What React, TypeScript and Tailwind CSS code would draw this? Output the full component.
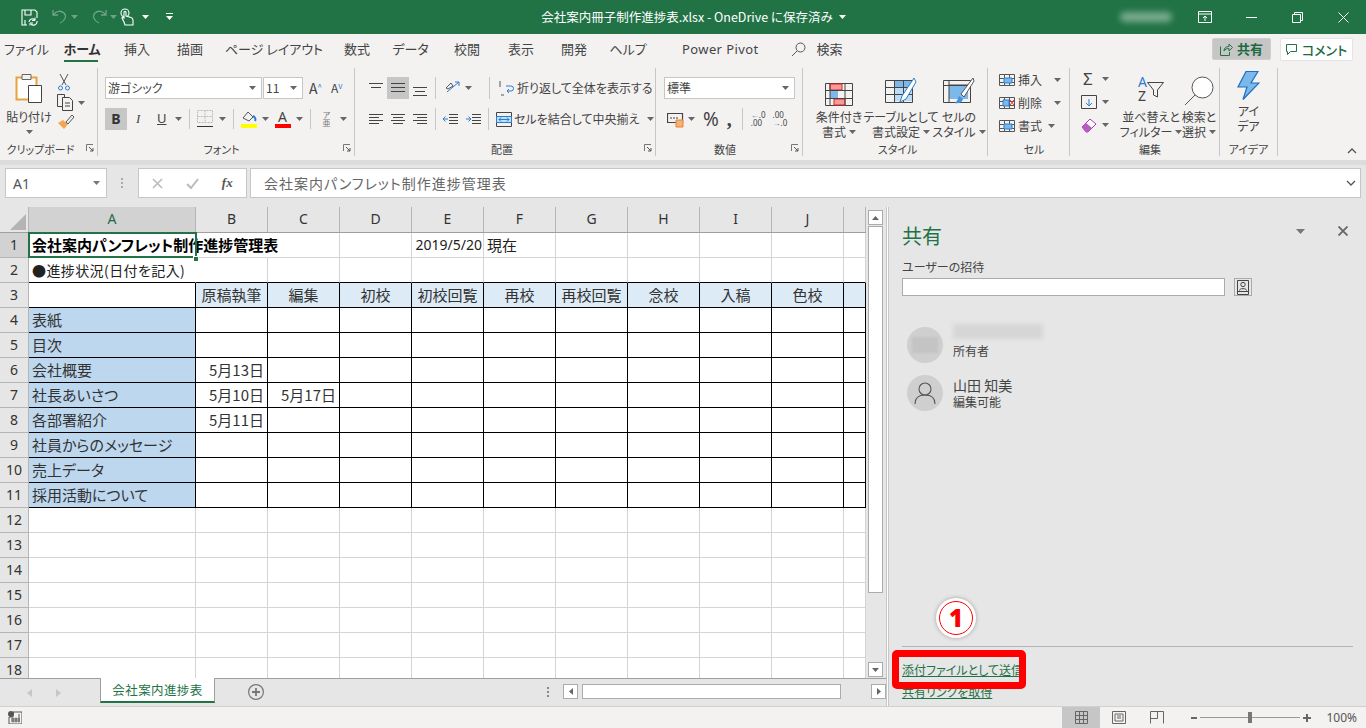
import React from "react";

const FONT = "[font-family:'Noto_Sans_CJK_JP','Noto_Sans',sans-serif]";

function Car({ c = "#666", className = "" }: { c?: string; className?: string }) {
  return (
    <svg width="7" height="4" viewBox="0 0 7 4" className={"shrink-0 " + className}>
      <path d="M0 0h7L3.5 4z" fill={c} />
    </svg>
  );
}
function Launcher() {
  return (
    <svg width="8" height="8" viewBox="0 0 8 8" className="absolute right-[3px] bottom-[4px]">
      <path d="M.5 7V.5H7" fill="none" stroke="#777" />
      <path d="M3 3l4 4M7 4v3H4" fill="none" stroke="#555" />
    </svg>
  );
}
function Sep({ h = 20, className = "" }: { h?: number; className?: string }) {
  return <div className={"w-px bg-[#c6c6c6] shrink-0 " + className} style={{ height: h }} />;
}
function Lines({ ws, gap = 5 }: { ws: [number, number][]; gap?: number }) {
  return (
    <svg width="16" height="16" viewBox="0 0 16 16">
      {ws.map(([x, w], i) => (
        <path key={i} d={`M${x} ${3.5 + i * gap}h${w}`} stroke="#444" />
      ))}
    </svg>
  );
}
function Group({ w, label, launcher, children, pad = 0 }: { w: number; label: string; launcher?: boolean; children: React.ReactNode; pad?: number }) {
  return (
    <div className="relative h-full flex flex-col shrink-0 border-r border-[#c6c6c6]" style={{ width: w, paddingLeft: pad }}>
      <div className="flex-1 min-h-0">{children}</div>
      <div className={"text-center text-[11px] leading-[14px] text-[#444] whitespace-nowrap " + (launcher ? "pr-4" : "")}>{label}</div>
      {launcher && <Launcher />}
    </div>
  );
}
function Combo({ w, text, cls = "" }: { w: number; text: string; cls?: string }) {
  return (
    <div className={"h-[22px] bg-white border border-[#c6c6c6] flex items-center justify-between pl-[2px] pr-[5px] text-[12px] text-[#444] " + cls} style={{ width: w }}>
      <span>{text}</span>
      <Car />
    </div>
  );
}
function Big({ w, icon, l1, l2, caret1 }: { w: number; icon: React.ReactNode; l1: string; l2: string; caret1?: boolean }) {
  return (
    <div className="flex flex-col items-center shrink-0" style={{ width: w }}>
      <div className="h-[38px] flex items-end">{icon}</div>
      <div className="mt-[3px] text-[12px] leading-[15px] text-[#444] whitespace-nowrap text-center">{l1}</div>
      <div className="text-[12px] leading-[15px] text-[#444] whitespace-nowrap flex items-center gap-[3px]">
        {l2}
        {caret1 !== false && <Car />}
      </div>
    </div>
  );
}

const cols = ["A", "B", "C", "D", "E", "F", "G", "H", "I", "J", ""];
const widths = [167, 72, 72, 72, 72, 72, 72, 72, 72, 72, 22];
const heads = ["", "原稿執筆", "編集", "初校", "初校回覧", "再校", "再校回覧", "念校", "入稿", "色校", ""];
const rowA = ["表紙", "目次", "会社概要", "社長あいさつ", "各部署紹介", "社員からのメッセージ", "売上データ", "採用活動について"];
const dates: Record<string, string> = { "6-1": "5月13日", "7-1": "5月10日", "7-2": "5月17日", "8-1": "5月11日" };

function Grid() {
  const rows = Array.from({ length: 18 }, (_, i) => i + 1);
  return (
    <div className={"relative w-[866px] flex-1 min-h-0 overflow-hidden bg-white pt-0 text-[15px] text-[#222] " + FONT}>
      <div className="flex h-[26px] bg-[#e6e6e6] border-b border-[#9f9f9f]">
        <div className="w-[29px] border-r border-[#b5b5b5] flex items-end justify-end p-[2px] shrink-0">
          <svg width="16" height="16" viewBox="0 0 16 16"><path d="M16 0v16H0z" fill="#b4b4b4" /></svg>
        </div>
        {cols.map((c, i) => (
          <div key={i} className={"shrink-0 text-center text-[14px] leading-[24px] border-r border-[#b5b5b5] [font-family:'Noto_Sans',sans-serif] " + (i === 0 ? "bg-[#d2d2d2] text-[#1f6b45]" : "text-[#333]")} style={{ width: widths[i] }}>
            {c}
          </div>
        ))}
      </div>
      {rows.map((r) => (
        <div key={r} className="flex h-[25px]">
          <div className={"w-[29px] shrink-0 border-r border-b border-[#b5b5b5] text-center text-[14px] leading-[24px] text-[#333] [font-family:'Noto_Sans',sans-serif] " + (r === 1 ? "bg-[#d2d2d2] text-[#1f6b45]" : "bg-[#e6e6e6]")}>{r}</div>
          {widths.map((w, i) => {
            const black = r >= 2 && r <= 11;
            const vblack = r >= 3 && r <= 11;
            let cls = "shrink-0 leading-[24px] whitespace-nowrap border-r border-b ";
            cls += black ? "border-b-black " : "border-b-[#d4d4d4] ";
            cls += vblack ? "border-r-black " : "border-r-[#d4d4d4] ";
            if (r === 1 && i < 2) cls += "border-r-transparent ";
            if (r === 2 && i === 0) cls += "border-r-transparent ";
            if (r === 3 && i > 0) cls += "bg-[#ddebf7] text-center text-[#333] ";
            if (r >= 4 && r <= 11 && i === 0) cls += "bg-[#bdd7ee] pl-[3px] text-[#333] ";
            let content = "";
            if (r === 1 && i === 0) { content = "会社案内パンフレット制作進捗管理表"; cls += "font-bold pl-[3px] text-black "; }
            if (r === 1 && i === 4) { content = "2019/5/20"; cls += "text-right pr-[1px] text-[14px] [font-family:'Noto_Sans',sans-serif] "; }
            if (r === 1 && i === 5) { content = "現在"; cls += "pl-[3px] "; }
            if (r === 2 && i === 0) { content = "●進捗状況(日付を記入)"; cls += "pl-[3px] text-[14px] tracking-[0.4px] "; }
            if (r === 3 && i > 0) content = heads[i];
            if (r >= 4 && r <= 11 && i === 0) content = rowA[r - 4];
            const d = dates[`${r}-${i}`];
            if (d) { content = d; cls += "text-right pr-[3px] text-[#333] "; }
            return (
              <div key={i} className={cls} style={{ width: w }}>
                {content}
              </div>
            );
          })}
        </div>
      ))}
      <div className="absolute left-[28px] top-[25px] w-[169px] h-[26px] border-2 border-[#217346]" />
      <div className="absolute left-[193px] top-[49px] w-[6px] h-[6px] bg-[#217346] border border-white" />
    </div>
  );
}

function Titlebar() {
  const dim = "#6da388";
  return (
    <div className="h-[34px] bg-[#217346] flex items-center shrink-0 text-white">
      <div className="flex-1 flex items-center pl-[21px]">
        <svg width="17" height="17" viewBox="0 0 17 17" fill="none" stroke="#fff" strokeWidth="1.1">
          <path d="M6 16H1V1h13l2 2v6" />
          <path d="M4 1v5h6V1M4 16v-5" />
          <path d="M8 13a3.5 3.5 0 0 1 6-2M16 12a3.5 3.5 0 0 1-6 3" />
          <path d="M14 8.500v3h-3M9 16.500v-2.500h3" strokeWidth="1" />
        </svg>
        <svg className="ml-[14px]" width="16" height="16" viewBox="0 0 16 16" fill="none" stroke={dim} strokeWidth="1.3">
          <path d="M1 1v5h5M1 6c3-4 8-5 11-2 3 3 1 8-4 10" />
        </svg>
        <Car c={dim} className="ml-[3px]" />
        <svg className="ml-[13px]" width="16" height="16" viewBox="0 0 16 16" fill="none" stroke={dim} strokeWidth="1.3">
          <path d="M15 1v5h-5M15 6C12 2 7 1 4 4c-3 3-1 8 4 10" />
        </svg>
        <Car c={dim} className="ml-[3px]" />
        <svg className="ml-[3px]" width="14" height="18" viewBox="0 0 14 18" fill="none" stroke="#fff" strokeWidth="1.1">
          <circle cx="5" cy="5" r="4" />
          <path d="M4 14L2 10c0-1 1-1 2 0V4.500c0-1.500 2-1.500 2 0V8l5 1.500c1.500.5 2 1.500 2 2.500v5H5z" fill="#217346" />
        </svg>
        <Car c="#fff" className="ml-[8px]" />
        <svg className="ml-[17px]" width="7" height="8" viewBox="0 0 7 8" fill="#fff">
          <path d="M0 0h7v1H0zM0 3h7L3.500 7z" />
        </svg>
      </div>
      <div className="flex items-center gap-[6px] text-[12.5px] whitespace-nowrap">
        <span>会社案内冊子制作進捗表.xlsx - OneDrive に保存済み</span>
        <Car c="#fff" />
      </div>
      <div className="flex-1 flex items-center justify-end">
        <div className="w-[52px] h-[10px] rounded-full bg-white/40 blur-[3px] mr-[10px]" />
        {[
          <svg key="a" width="14" height="12" viewBox="0 0 14 12" fill="none" stroke="#fff"><path d="M.5 .5h13v11H.5zM.5 3h13M7 10V5M5 7l2-2 2 2" /></svg>,
          <svg key="b" width="11" height="1" viewBox="0 0 11 1"><path d="M0 .5h11" stroke="#fff" /></svg>,
          <svg key="c" width="11" height="11" viewBox="0 0 11 11" fill="none" stroke="#fff"><path d="M.5 2.500h8v8h-8zM2.500 2.500v-2h8v8h-2" /></svg>,
          <svg key="d" width="11" height="11" viewBox="0 0 11 11" fill="none" stroke="#fff"><path d="M.5 .5l10 10M10.500 .5l-10 10" /></svg>,
        ].map((ic, i) => (
          <div key={i} className="w-[46px] h-[34px] flex items-center justify-center">{ic}</div>
        ))}
      </div>
    </div>
  );
}

const tabs: [string, number][] = [
  ["ファイル", 53], ["ホーム", 58], ["挿入", 52], ["描画", 54], ["ページ レイアウト", 114], ["数式", 52], ["データ", 55], ["校閲", 58], ["表示", 50], ["開発", 56], ["ヘルプ", 52],
];

function Tabs() {
  return (
    <div className="h-[30px] bg-[#f3f2f1] flex items-start shrink-0 text-[13px] text-[#444]">
      {tabs.map(([t, w]) => (
        <div key={t} className={"shrink-0 text-center whitespace-nowrap leading-[30px] relative " + (t === "ホーム" ? "font-bold text-[#333]" : "")} style={{ width: w }}>
          {t}
          {t === "ホーム" && <div className="absolute left-[11px] w-[34px] h-[2px] bottom-[2px] bg-[#217346]" />}
        </div>
      ))}
      <div className="ml-[28px] leading-[30px] text-[13px] [font-family:'Noto_Sans',sans-serif] tracking-[0.4px] whitespace-nowrap">Power Pivot</div>
      <svg className="ml-[32px] mt-[8px]" width="15" height="15" viewBox="0 0 15 15" fill="none" stroke="#555"><circle cx="9.500" cy="5.500" r="4.500" /><path d="M6 9l-5 5" /></svg>
      <div className="ml-[11px] leading-[30px]">検索</div>
      <div className="flex-1" />
      <div className="mt-[4px] w-[59px] h-[22px] bg-[#c6c6c6] rounded-[2px] flex items-center justify-center gap-[4px] text-[#1c6a3f] font-bold border border-[#cfcfcf]">
        <svg width="13" height="13" viewBox="0 0 13 13" fill="none" stroke="#217346"><path d="M.5 3.500v9h9V9M4 8c0-3 2-4.500 5-4.500V1l3.500 3.500L9 8V5.500C7 5.500 5 6 4 8z" /></svg>
        共有
      </div>
      <div className="mt-[4px] ml-[9px] mr-[13px] w-[73px] h-[23px] bg-white rounded-[2px] flex items-center justify-center gap-[4px] text-[#1c6a3f] font-medium border border-[#e4e4e4]">
        <svg width="12" height="12" viewBox="0 0 12 12" fill="none" stroke="#217346"><path d="M.5 .5h10v7h-6L1.500 10.500V7.500h-1z" /></svg>
        コメント
      </div>
    </div>
  );
}

function Ribbon() {
  return (
    <div className="h-[96px] bg-[#f3f2f1] flex shrink-0 py-[4px] text-[#444]">
      <Group w={98} label="クリップボード" launcher>
        <div className="flex">
          <div className="w-[58px] flex flex-col items-center pt-[5px]">
            <svg width="28" height="30" viewBox="0 0 28 30">
              <path d="M1.500 4.500h20v22h-20z" fill="#fdfdfd" stroke="#e8a33d" strokeWidth="2" />
              <path d="M7 1.500h9v5H7z" fill="#f3f2f1" stroke="#666" />
              <path d="M13.500 12.500h13v17h-13z" fill="#fff" stroke="#444" />
            </svg>
            <div className="text-[12px] leading-[15px] mt-[6px] whitespace-nowrap">貼り付け</div>
            <Car className="mt-[6px]" />
          </div>
          <div className="flex flex-col pt-[5px] gap-[3px] -ml-[1px]">
            <svg width="14" height="18" viewBox="0 0 14 18" fill="none" stroke="#555"><path d="M3 1l6 11M11 1L5 12" /><circle cx="3.500" cy="15" r="2" stroke="#2b7cd3" /><circle cx="10.500" cy="15" r="2" stroke="#2b7cd3" /></svg>
            <div className="flex items-center gap-[3px]">
              <svg width="18" height="17" viewBox="0 0 18 17" fill="none" stroke="#444"><path d="M5.500 12.500h-5v-12h7v3M5.500 3.500h7l3 3v10h-10zM8 9h5M8 12h5" /></svg>
              <Car />
            </div>
            <svg width="18" height="16" viewBox="0 0 18 16"><path d="M1 9l6 6 4-5-5-4z" fill="#f6a44e" /><path d="M9 8l6-7 2 2-6 7z" fill="none" stroke="#555" /></svg>
          </div>
        </div>
      </Group>

      <Group w={257} label="フォント" launcher pad={7}>
        <div className="flex items-center mt-[9px]">
          <Combo w={157} text="游ゴシック" />
          <Combo w={40} text="11" cls="ml-[1px]" />
          <span className="ml-[6px] text-[14px] w-[22px] leading-[22px] text-[#444]">A<sup className="text-[#2b7cd3] text-[8px]">^</sup></span>
          <span className="text-[12px] w-[22px] leading-[22px] text-[#444]">A<sup className="text-[#2b7cd3] text-[8px]">v</sup></span>
        </div>
        <div className="flex items-center mt-[9px] h-[22px]">
          <div className="w-[22px] h-[22px] bg-[#c6c6c6] text-center font-bold text-[14px] leading-[22px] text-[#333] [font-family:'Noto_Sans',sans-serif]">B</div>
          <span className="ml-[9px] w-[8px] italic text-[13px] [font-family:'Liberation_Serif',serif]">I</span>
          <span className="ml-[13px] underline text-[13px] [font-family:'Noto_Sans',sans-serif]">U</span>
          <Car className="ml-[8px]" />
          <Sep className="ml-[7px]" />
          <svg className="ml-[7px]" width="16" height="18" viewBox="0 0 16 18" fill="none"><path d="M.5 .5h15v12H.5zM8 .5v12M.5 6.500h15" stroke="#bbb" strokeDasharray="2 1" /><path d="M0 16.500h16" stroke="#333" /></svg>
          <Car className="ml-[6px]" />
          <Sep className="ml-[7px]" />
          <svg className="ml-[7px]" width="16" height="18" viewBox="0 0 16 18"><path d="M2 8l5-6 5 5-4 4z" fill="none" stroke="#555" /><path d="M12 6c2 1 3 3 2 5" stroke="#2b7cd3" strokeWidth="2" fill="none" /><path d="M0 14h16v4H0z" fill="#ffff00" /></svg>
          <Car className="ml-[5px]" />
          <div className="ml-[6px] w-[16px] flex flex-col items-center">
            <span className="text-[14px] leading-[14px] [font-family:'Noto_Sans',sans-serif]">A</span>
            <div className="w-[16px] h-[4px] bg-[#ff0000]" />
          </div>
          <Car className="ml-[5px]" />
          <Sep className="ml-[7px]" />
          <div className="ml-[11px] w-[10px] flex flex-col items-center text-[8px] leading-[8px] text-[#777]"><span>ア</span><span>亜</span></div>
          <Car className="ml-[8px]" />
        </div>
      </Group>

      <Group w={301} label="配置" launcher pad={10}>
        <div className="flex items-center mt-[9px] h-[22px]">
          <div className="w-[22px] flex justify-center"><Lines ws={[[1, 14], [3, 10]]} gap={4} /></div>
          <div className="w-[22px] h-[22px] bg-[#c6c6c6] flex items-center justify-center"><Lines ws={[[1, 14], [1, 14], [1, 14]]} gap={4} /></div>
          <div className="w-[22px] flex justify-center"><svg width="16" height="16" viewBox="0 0 16 16"><path d="M1 7.500h14M3 11.500h10M1 15.500h14" stroke="#444" /></svg></div>
          <Sep h={22} className="ml-[4px]" />
          <svg className="ml-[9px]" width="16" height="16" viewBox="0 0 16 16" fill="none"><path d="M2 12L14 2M14 2h-4M14 2v4" stroke="#2b7cd3" /><path d="M1 8l5-5 2 3-5 3z" stroke="#555" /></svg>
          <Car className="ml-[4px]" />
          <Sep h={22} className="ml-[17px]" />
          <svg className="ml-[9px]" width="15" height="16" viewBox="0 0 15 16" fill="none" stroke="#2b7cd3"><path d="M8 11h4a2 2 0 0 0 0-5H7M8 11l2-2M8 11l2 2" /><path d="M1 1v6M5 15H2" stroke="#555" /></svg>
          <span className="ml-[3px] text-[12px] whitespace-nowrap">折り返して全体を表示する</span>
        </div>
        <div className="flex items-center mt-[9px] h-[22px]">
          <div className="w-[22px] flex justify-center"><Lines ws={[[1, 14], [1, 10], [1, 14], [1, 10]]} gap={3} /></div>
          <div className="w-[22px] flex justify-center"><Lines ws={[[1, 14], [3, 10], [1, 14], [3, 10]]} gap={3} /></div>
          <div className="w-[22px] flex justify-center"><Lines ws={[[1, 14], [5, 10], [1, 14], [5, 10]]} gap={3} /></div>
          <Sep h={22} className="ml-[4px]" />
          <svg className="ml-[7px]" width="15" height="12" viewBox="0 0 15 12" fill="none"><path d="M6 1.500h9M6 4.500h9M6 7.500h9M6 10.500h9" stroke="#444" /><path d="M5 6H0M0 6l2.500-2.500M0 6l2.500 2.500" stroke="#2b7cd3" /></svg>
          <svg className="ml-[8px]" width="15" height="12" viewBox="0 0 15 12" fill="none"><path d="M6 1.500h9M6 4.500h9M6 7.500h9M6 10.500h9" stroke="#444" /><path d="M0 6h5M5 6L2.500 3.500M5 6L2.500 8.500" stroke="#2b7cd3" /></svg>
          <Sep h={22} className="ml-[7px]" />
          <svg className="ml-[7px]" width="16" height="15" viewBox="0 0 16 15" fill="none"><path d="M.5 .5h15v14H.5z" stroke="#444" /><path d="M.5 4.500h15v6H.5z" fill="#bfe0f7" stroke="#2b7cd3" /><path d="M3 7.500h10M3 7.500l2-2M3 7.500l2 2M13 7.500l-2-2M13 7.500l-2 2" stroke="#2b7cd3" /></svg>
          <span className="ml-[2px] text-[12px] whitespace-nowrap">セルを結合して中央揃え</span>
          <Car className="ml-[8px]" />
        </div>
      </Group>

      <Group w={147} label="数値" launcher pad={8}>
        <Combo w={131} text="標準" cls="mt-[9px]" />
        <div className="flex items-center mt-[9px] h-[22px]">
          <svg className="ml-[3px]" width="17" height="18" viewBox="0 0 17 18" fill="none"><path d="M.5 3.500h15v9H.5z" stroke="#444" strokeWidth="1.200" /><path d="M4 7v2M7 7v2M10 7v2" stroke="#444" /><path d="M9 10h7v7H9z" fill="#f3b27a" stroke="#e8842b" /></svg>
          <Car className="ml-[4px]" />
          <span className="ml-[8px] text-[19px] leading-[22px] [font-family:'Noto_Sans',sans-serif]">%</span>
          <span className="ml-[8px] text-[20px] font-bold leading-[22px] [font-family:'Liberation_Serif',serif]">,</span>
          <Sep h={22} className="ml-[10px]" />
          <div className="ml-[8px] flex flex-col text-[8px] leading-[8px] [font-family:'Noto_Sans',sans-serif]">
            <span className="whitespace-nowrap"><b className="text-[#2b7cd3] font-normal">←</b>.0</span>
            <span className="whitespace-nowrap">.00</span>
          </div>
          <div className="ml-[7px] flex flex-col text-[8px] leading-[8px] [font-family:'Noto_Sans',sans-serif]">
            <span className="whitespace-nowrap">.00</span>
            <span className="whitespace-nowrap"><b className="text-[#2b7cd3] font-normal">→</b>.0</span>
          </div>
        </div>
      </Group>

      <Group w={185} label="スタイル" pad={5}>
        <div className="flex">
          <Big w={62} l1="条件付き" l2="書式" icon={
            <svg width="28" height="23" viewBox="0 0 28 23" fill="none"><path d="M.5 .5h27v22H.5z" stroke="#444" /><path d="M5 1h12v6H5zM9 16h11v6H9z" fill="#f69a9a" stroke="#d22" /><path d="M5 8h8v7H5z" fill="#7db8ea" /><path d="M.5 7.500h27M.5 15.500h27M5 1v21M20 1v21" stroke="#444" /></svg>
          } />
          <Big w={62} l1="テーブルとして" l2="書式設定" icon={
            <svg width="32" height="30" viewBox="0 0 32 30" fill="none"><path d="M.5 4.500h27v22H.5z" stroke="#444" /><path d="M9 5h18v6H9z" fill="#7db8ea" /><path d="M9 12h18v13H9z" fill="#bcdcf5" /><path d="M.5 11.500h27M.5 18.500h27M9.500 4v22M18.500 4v22" stroke="#444" /><path d="M29 2L17 20l-2 6 6-3L31 6z" fill="#fff" stroke="#2b7cd3" /></svg>
          } />
          <Big w={54} l1="セルの" l2="スタイル" icon={
            <svg width="32" height="30" viewBox="0 0 32 30" fill="none"><path d="M.5 4.500h27v22H.5z" stroke="#444" /><path d="M6 9h19v14H6z" fill="#7db8ea" /><path d="M6 9h19M.5 9.500h27M6 4v22" stroke="#444" /><path d="M30 2L18 18l3 3L31 5z" fill="#fff" stroke="#555" /><path d="M16 20l4 3c-1 4-5 5-8 4 2-2 3-4 4-7z" fill="#3d93dc" /></svg>
          } />
        </div>
      </Group>

      <Group w={82} label="セル" pad={11}>
        <div className="flex flex-col gap-[7px] pt-[4px]">
          {[
            ["挿入", "#2b7cd3"],
            ["削除", "#e33"],
            ["書式", "#2b7cd3"],
          ].map(([t, c], i) => (
            <div key={t} className="flex items-center h-[16px] text-[12px] whitespace-nowrap">
              <svg width="16" height="14" viewBox="0 0 16 14" fill="none"><path d="M.5 1.500h15v11H.5zM.5 5.500h15M.5 9.500h15M5.500 1v12M10.500 1v12" stroke="#555" /><path d={i === 1 ? "M4 4h6v6H4z" : "M5 5h8v5H5z"} fill="#7db8ea" stroke="#2b7cd3" />{i === 1 && <path d="M11 4l4 5M15 4l-4 5" stroke={c} />}</svg>
              <span className="ml-[3px]">{t}</span>
              <Car className={i === 2 ? "ml-[6px]" : "ml-[12px]"} />
            </div>
          ))}
        </div>
      </Group>

      <Group w={150} label="編集" pad={11}>
        <div className="flex">
          <div className="flex flex-col gap-[7px] pt-[3px] w-[43px]">
            <div className="h-[16px] flex items-center pl-[2px]">
              <span className="text-[17px] leading-[16px] w-[13px] [font-family:'Noto_Sans',sans-serif]">Σ</span>
              <Car className="ml-[6px]" />
            </div>
            <div className="h-[16px] flex items-center">
              <svg width="16" height="14" viewBox="0 0 16 14" fill="none"><path d="M.5 .5h15v13H.5z" stroke="#444" /><path d="M8 4v7M5 8l3 3 3-3" stroke="#2b7cd3" /></svg>
              <Car className="ml-[5px]" />
            </div>
            <div className="h-[16px] flex items-center">
              <svg width="16" height="15" viewBox="0 0 16 15" fill="none"><path d="M1 9l8-8 6 5-8 8H5z" fill="#fff" stroke="#a83fb0" /><path d="M1 9l4-4 6 5-4 4H5z" fill="#b75cc0" /></svg>
              <Car className="ml-[5px]" />
            </div>
          </div>
          <Big w={56} l1="並べ替えと" l2="フィルター" icon={
            <div className="flex items-start h-[31px]">
              <div className="flex flex-col text-[14px] leading-[14px] [font-family:'Noto_Sans',sans-serif]"><span className="text-[#2b7cd3]">A</span><span>Z</span></div>
              <svg className="mt-[7px]" width="17" height="16" viewBox="0 0 17 16" fill="none" stroke="#444"><path d="M.5 .5h16L10.500 8v7l-4-2V8z" /></svg>
            </div>
          } />
          <Big w={40} l1="検索と" l2="選択" icon={
            <svg width="30" height="30" viewBox="0 0 30 30" fill="none" stroke="#555"><circle cx="18.500" cy="11.500" r="10.500" fill="#fff" /><path d="M11 19L1 29" /></svg>
          } />
        </div>
      </Group>

      <Group w={58} label="アイデア">
        <div className="flex flex-col items-center pt-[3px]">
          <svg width="23" height="29" viewBox="0 0 23 29"><path d="M9 .5h12L14 12h8L6 28.500 10 16H1z" fill="#7db8ea" stroke="#1e70c0" strokeWidth="1.200" /></svg>
          <div className="mt-[3px] text-[12px] leading-[15px]">アイ</div>
          <div className="text-[12px] leading-[15px]">デア</div>
        </div>
      </Group>
      <div className="flex-1 relative">
        <svg className="absolute right-[9px] bottom-[2px]" width="10" height="6" viewBox="0 0 10 6" fill="none" stroke="#555" strokeWidth="1.300"><path d="M1 5l4-4 4 4" /></svg>
      </div>
    </div>
  );
}

function FormulaBar() {
  return (
    <div className="h-[47px] shrink-0 bg-[#e6e6e6] border-t-[5px] border-[#dcdcdc] flex items-start pt-[3px] pl-[5px]">
      <div className="w-[102px] h-[30px] bg-white border border-[#c6c6c6] flex items-center justify-between pl-[7px] pr-[6px] text-[14px] text-[#555] [font-family:'Noto_Sans',sans-serif]">
        A1<Car c="#777" />
      </div>
      <div className="w-[31px] h-[30px] flex items-center justify-center">
        <svg width="3" height="11" viewBox="0 0 3 11" fill="#aaa"><path d="M0 0h2v2H0zM0 4h2v2H0zM0 8h2v2H0z" /></svg>
      </div>
      <div className="w-[109px] h-[30px] bg-white border border-[#c6c6c6] flex items-center justify-around pl-[2px] pr-[2px]">
        <svg width="11" height="11" viewBox="0 0 11 11" fill="none" stroke="#bbb" strokeWidth="1.600"><path d="M1 1l9 9M10 1l-9 9" /></svg>
        <svg width="13" height="11" viewBox="0 0 13 11" fill="none" stroke="#bbb" strokeWidth="2"><path d="M1 6l4 4 7-9" /></svg>
        <span className="italic font-bold text-[13px] text-[#555] [font-family:'Liberation_Serif',serif]">fx</span>
      </div>
      <div className={"ml-[3px] flex-1 mr-[5px] h-[30px] bg-white border border-[#c6c6c6] flex items-center justify-between pl-[13px] pr-[4px] text-[14px] tracking-[1px] text-[#666] " + FONT}>
        <span>会社案内パンフレット制作進捗管理表</span>
        <svg width="10" height="6" viewBox="0 0 10 6" fill="none" stroke="#555" strokeWidth="1.300"><path d="M1 1l4 4 4-4" /></svg>
      </div>
    </div>
  );
}

function VScroll() {
  return (
    <div className="w-[21px] shrink-0 bg-[#e6e6e6] border-r border-[#c6c6c6] flex flex-col items-center pt-[3px] pl-[2px] pr-[3px]">
      <div className="w-[15px] h-[15px] bg-white border border-[#ababab] flex items-center justify-center"><svg width="7" height="4" viewBox="0 0 7 4"><path d="M3.500 0L7 4H0z" fill="#666" /></svg></div>
      <div className="w-[15px] h-[367px] bg-white border border-[#ababab] mt-[1px]" />
      <div className="flex-1" />
      <div className="w-[15px] h-[15px] bg-white border border-[#ababab] mb-[1px] flex items-center justify-center"><Car /></div>
    </div>
  );
}

function SheetBar() {
  return (
    <div className={"h-[28px] shrink-0 bg-[#e6e6e6] border-t border-[#9f9f9f] flex items-start border-r border-r-[#c6c6c6] " + FONT}>
      <div className="w-[100px] h-full flex items-center pl-[27px] gap-[24px]">
        <svg width="5" height="8" viewBox="0 0 5 8"><path d="M5 0v8L0 4z" fill="#c6c6c6" /></svg>
        <svg width="5" height="8" viewBox="0 0 5 8"><path d="M0 0v8l5-4z" fill="#c6c6c6" /></svg>
      </div>
      <div className="-mt-px w-[115px] h-[25px] bg-white border-x border-[#9f9f9f] border-b-2 border-b-[#217346] text-center text-[12.500px] tracking-[0.4px] leading-[24px] text-[#217346]">会社案内進捗表</div>
      <svg className="ml-[33px] mt-[5px]" width="16" height="16" viewBox="0 0 16 16" fill="none" stroke="#777" strokeWidth="1.200"><circle cx="8" cy="8" r="7.400" /><path d="M8 4v8M4 8h8" strokeWidth="1.800" /></svg>
      <div className="flex-1" />
      <svg className="mt-[8px] mr-[13px]" width="3" height="11" viewBox="0 0 3 11" fill="#888"><path d="M0 0h2v2H0zM0 4h2v2H0zM0 8h2v2H0z" /></svg>
      <div className="mt-[5px] mr-[4px] w-[15px] h-[15px] bg-white border border-[#ababab] flex items-center justify-center"><svg width="4" height="7" viewBox="0 0 4 7"><path d="M4 0v7L0 3.500z" fill="#666" /></svg></div>
      <div className="mt-[5px] w-[259px] h-[15px] bg-white border border-[#ababab]" />
      <div className="mt-[5px] ml-[30px] mr-[0px] w-[15px] h-[15px] bg-white border border-[#ababab] flex items-center justify-center"><svg width="4" height="7" viewBox="0 0 4 7"><path d="M0 0v7l4-3.500z" fill="#666" /></svg></div>
    </div>
  );
}

function SidePane() {
  return (
    <div className={"relative flex-1 min-w-0 bg-[#e6e6e6] border-l border-[#c6c6c6] ml-[1px] flex flex-col pl-[13px] pr-[13px] " + FONT}>
      <div className="flex items-center mt-[16px] h-[26px]">
        <span className="text-[20px] leading-[26px] text-[#217346]">共有</span>
        <div className="flex-1" />
        <svg className="mb-[10px]" width="9" height="5" viewBox="0 0 9 5"><path d="M0 0h9L4.500 5z" fill="#777" /></svg>
        <svg className="ml-[33px] mr-[5px] mb-[10px]" width="10" height="10" viewBox="0 0 10 10" fill="none" stroke="#666" strokeWidth="1.800"><path d="M.5 .5l9 9M9.500 .5l-9 9" /></svg>
      </div>
      <div className="mt-[9px] text-[12px] leading-[18px] text-[#444]">ユーザーの招待</div>
      <div className="mt-[2px] flex items-center">
        <div className="w-[323px] h-[18px] bg-white border border-[#ababab]" />
        <div className="ml-[9px] w-[18px] h-[18px] border border-[#ababab] flex items-center justify-center">
          <svg width="12" height="15" viewBox="0 0 12 15" fill="none" stroke="#444"><path d="M.5 .5h11v14H.5zM.5 11.500h11" /><circle cx="6" cy="4.500" r="2.200" /><path d="M2.500 10.500c0-2.500 7-2.500 7 0" /></svg>
        </div>
      </div>
      <div className="mt-[31px] ml-[5px] flex items-center h-[36px]">
        <div className="w-[36px] h-[36px] rounded-full bg-[#cfcfcf] flex items-center justify-center">
          <div className="w-[26px] h-[16px] bg-[#c4c4c4] blur-[1px]" />
        </div>
        <div className="ml-[10px] flex flex-col">
          <div className="w-[90px] h-[15px] bg-[#d6d6d6] blur-[2px] mt-[-6px]" />
          <div className="text-[12px] leading-[18px] text-[#444] mt-[3px]">所有者</div>
        </div>
      </div>
      <div className="mt-[12px] ml-[5px] flex items-center h-[36px]">
        <div className="w-[36px] h-[36px] rounded-full bg-[#cfcfcf] flex items-center justify-center">
          <svg width="22" height="24" viewBox="0 0 22 24" fill="none" stroke="#555" strokeWidth="1.100"><circle cx="11" cy="8" r="6" /><path d="M1 23c0-6 4-9 10-9s10 3 10 9" /></svg>
        </div>
        <div className="ml-[10px] flex flex-col">
          <div className="text-[14px] leading-[18px] text-[#444]">山田 知美</div>
          <div className="text-[12px] leading-[16px] text-[#444]">編集可能</div>
        </div>
      </div>
      <div className="flex-1" />
      <div className="h-px bg-[#b4b4b4]" />
      <div className="mt-[14px] text-[12px] leading-[18px] text-[#217346] underline">添付ファイルとして送信</div>
      <div className="mt-[4px] mb-[5px] text-[12px] leading-[18px] text-[#217346] underline">共有リンクを取得</div>

      <div className="absolute left-[3px] bottom-[17px] w-[134px] h-[39px] border-[7px] border-[#ff0000] rounded-[5px]" />
      <div className="absolute left-[47px] top-[391px] w-[40px] h-[40px] rounded-full bg-white shadow-[0_0_4px_rgba(0,0,0,0.3)] flex items-center justify-center">
        <div className="w-[34px] h-[34px] rounded-full border border-[#ff0000] text-center text-[24px] font-black leading-[31px] text-[#ff0000] [font-family:'Noto_Sans',sans-serif]">1</div>
      </div>
    </div>
  );
}

function StatusBar() {
  return (
    <div className="h-[22px] shrink-0 bg-[#f3f2f1] border-t border-[#d0d0d0] flex items-center pl-[8px] text-[#555]">
      <svg width="14" height="13" viewBox="0 0 14 13"><circle cx="3" cy="3" r="3" fill="#555" /><path d="M5 1h9v12H1V6h4z" fill="none" stroke="#555" /><path d="M3 8h9M3 10h9M5 6.500v5M8 6.500v5M11 3v8.500" stroke="#555" /></svg>
      <div className="flex-1" />
      <div className="w-[38px] h-[21px] bg-[#c6c6c6] flex items-center justify-center">
        <svg width="13" height="13" viewBox="0 0 13 13" fill="none" stroke="#666"><path d="M.5 .5h12v12H.5zM.5 4.500h12M.5 8.500h12M4.500 .5v12M8.500 .5v12" /></svg>
      </div>
      <div className="w-[38px] h-[21px] flex items-center justify-center">
        <svg width="14" height="13" viewBox="0 0 14 13" fill="none" stroke="#666"><path d="M.5 .5h13v12H.5zM3 3h8v7H3zM5 5h4M5 7h4" /></svg>
      </div>
      <div className="w-[38px] h-[21px] flex items-center justify-center">
        <svg width="14" height="13" viewBox="0 0 14 13" fill="none" stroke="#666"><path d="M.5 12.500V.5h13v12M.5 7.500h7V.5" /></svg>
      </div>
      <svg className="ml-[15px]" width="6" height="2" viewBox="0 0 6 2"><path d="M0 0h6v2H0z" fill="#666" /></svg>
      <div className="ml-[3px] w-[100px] flex items-center">
        <div className="w-full h-px bg-[#999] relative">
          <div className="absolute left-[48px] -top-[5px] w-[4px] h-[11px] bg-[#777]" />
        </div>
      </div>
      <svg className="ml-[3px]" width="8" height="8" viewBox="0 0 8 8"><path d="M3 0h2v3h3v2H5v3H3V5H0V3h3z" fill="#666" /></svg>
      <span className="ml-[15px] mr-[9px] text-[12px] [font-family:'Noto_Sans',sans-serif]">100%</span>
    </div>
  );
}

export default function App() {
  return (
    <div className={"w-[1366px] h-[728px] overflow-hidden flex flex-col [font-feature-settings:'palt'] " + FONT}>
      <Titlebar />
      <Tabs />
      <Ribbon />
      <FormulaBar />
      <div className="flex-1 min-h-0 flex">
        <div className="w-[887px] shrink-0 flex flex-col">
          <div className="flex-1 min-h-0 flex">
            <Grid />
            <VScroll />
          </div>
          <SheetBar />
        </div>
        <SidePane />
      </div>
      <StatusBar />
    </div>
  );
}
